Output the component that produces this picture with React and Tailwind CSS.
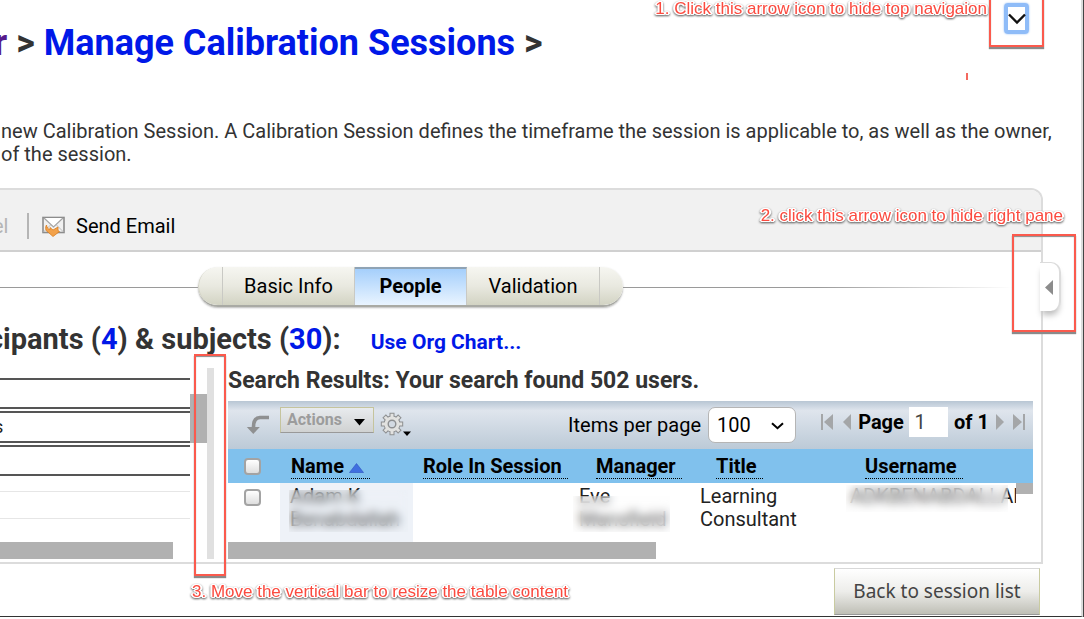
import React from "react";

const noteText =
  "absolute whitespace-nowrap font-['Liberation_Sans',sans-serif] text-[17px] leading-5 text-[#fb4a3f] [text-shadow:1px_0_0_#fff,-1px_0_0_#fff,0_1px_0_#fff,0_-1px_0_#fff,1px_1px_0_#fff,-1px_1px_0_#fff,1px_-1px_0_#fff,-1px_-1px_0_#fff,2px_0_0_#fff,-2px_0_0_#fff] [filter:drop-shadow(0_1px_1px_#555)]";
const noteBox =
  "pointer-events-none absolute border-2 border-[#fb5a4d] shadow-[0_2px_1px_#8a8a8a,inset_0_1px_1px_#8a8a8a]";

function Notes() {
  return (
    <>
      <p className={`${noteText} right-[96px] -top-[1px]`}>1. Click this arrow icon to hide top navigaion</p>
      <div className={`${noteBox} right-[39px] -top-[8px] h-[55px] w-[55px]`} />
      <div className="absolute right-[115px] top-[73px] h-[7px] w-[2px] bg-[#f4695f]" />
      <p className={`${noteText} right-[20px] top-[206px]`}>2. click this arrow icon to hide right pane</p>
      <div className={`${noteBox} right-[7px] top-[234px] h-[98px] w-[64px]`} />
      <div className={`${noteBox} left-[194px] top-[354px] h-[222px] w-[32px]`} />
      <p className={`${noteText} left-[192px] top-[582px]`}>3. Move the vertical bar to resize the table content</p>
    </>
  );
}

function EnvelopeIcon() {
  return (
    <svg width="23" height="21" viewBox="0 0 23 21" aria-hidden="true">
      <rect x="1" y="1.5" width="21" height="15" fill="#f1f1f1" stroke="#8c8c8c" strokeWidth="1.6" />
      <path d="M2 2l9.500 9 9.500-9" fill="#fff" stroke="#a5a5a5" strokeWidth="1.200" />
      <path d="M1.500 16l7-7M21.500 16l-7-7" stroke="#bdbdbd" />
      <path d="M4.500 9c-1.500 2.500-1 6 2 7.500l4.500 4 6.500-5-1.500-1V11l-5 3-3-2.500v2C6 13 4.800 11.500 4.500 9z" fill="#f2a14a" stroke="#dc7d1e" strokeWidth=".8" />
    </svg>
  );
}

function ReturnIcon() {
  return (
    <svg width="24" height="22" viewBox="0 0 24 22" aria-hidden="true">
      <path d="M23 3.500H14Q7.500 4 7.500 13" fill="none" stroke="#8f9091" strokeWidth="3.600" />
      <path d="M.8 13h13L7.300 20z" fill="#8f9091" />
    </svg>
  );
}

function GearIcon() {
  return (
    <svg width="32" height="26" viewBox="0 0 32 26" aria-hidden="true">
      <g stroke="#8d8f91" strokeWidth="5">
        <path d="M12 .8v22.400M.8 12h22.400M4.100 4.100l15.800 15.800M19.900 4.100L4.100 19.900" />
      </g>
      <circle cx="12" cy="12" r="8.500" fill="#8d8f91" />
      <g stroke="#e2e2e0" strokeWidth="3">
        <path d="M12 1.800v20.400M1.800 12h20.400M4.800 4.800l14.400 14.400M19.200 4.800L4.800 19.200" />
      </g>
      <circle cx="12" cy="12" r="7.600" fill="#e2e2e0" />
      <circle cx="12" cy="12" r="3.800" fill="#d3dae2" stroke="#8d8f91" strokeWidth="1.400" />
      <path d="M23 19.500h8l-4 4.500z" fill="#000" />
    </svg>
  );
}

function PagerIcon({ d }) {
  return (
    <svg width="13" height="16" viewBox="0 0 13 16" fill="#a4a6a8" aria-hidden="true">
      <path d={d} />
    </svg>
  );
}

function TabBar() {
  const cell = "flex h-full items-center justify-center border-r border-[#c9c9c4]";
  const face = "bg-linear-to-b from-[#f6f6f1] via-[#e9e9e0] to-[#d2d3c3]";
  return (
    <div className="flex items-center pt-[15px]">
      <div className="h-px w-[198px] shrink-0 bg-[#9a9a9a]" />
      <nav className="flex h-[40px] shrink-0 overflow-hidden rounded-full border-b-2 border-[#a9aaa4] text-[20px] text-black shadow-[0_1px_2px_#bbb]">
        <span className={`${cell} ${face} w-[25px] rounded-l-full border-l border-l-[#cfcfc0]`} />
        <button className={`${cell} ${face} w-[132px]`}>Basic Info</button>
        <button className={`${cell} w-[112px] border-t-2 border-t-[#8fa3b5] bg-linear-to-b from-[#a5cffb] to-[#e9f4ff] pb-[2px] font-bold`}>
          People
        </button>
        <button className={`${cell} ${face} w-[133px]`}>Validation</button>
        <span className={`${face} h-full w-[23px] rounded-r-full`} />
      </nav>
      <div className="mr-[29px] h-px flex-1 bg-linear-to-r from-[#9a9a9a] from-50% to-white" />
    </div>
  );
}

function LeftPane() {
  return (
    <div className="flex w-[207px] shrink-0">
      <div className="flex w-[190px] flex-col pt-[22px]">
        <div className="h-[31px] border-t-2 border-b-2 border-[#555]" />
        <div className="mt-[2px] flex h-[32px] items-center overflow-hidden border-t-2 border-b-2 border-[#555] text-[18px] leading-none text-[#222]">
          <span className="-ml-[6px]">s</span>
        </div>
        <div className="mt-[2px] h-[31px] border-t-2 border-b-2 border-[#555]" />
        <div className="mt-[15px] h-[28px] border-t border-b border-[#e6e6e6]" />
        <div className="mt-[23px] h-[17px] w-[173px] bg-[#b1b1b1]" />
      </div>
      <div className="mt-[38px] h-[49px] w-[17px] bg-[#b1b1b1]" />
    </div>
  );
}

const check =
  "block size-[17px] appearance-none rounded-[4px] border-2 border-[#a3a3a3] bg-linear-to-b from-white to-[#dedede]";
const headLink = "inline-block border-b border-dotted border-black pr-[6px] leading-[24px] text-black";

function ResultsTable() {
  return (
    <div className="relative h-[93px] overflow-hidden">
      <table className="w-full table-fixed border-collapse text-left">
        <colgroup>
          <col className="w-[52px]" />
          <col className="w-[133px]" />
          <col className="w-[153px]" />
          <col className="w-[120px]" />
          <col className="w-[148px]" />
          <col />
        </colgroup>
        <thead>
          <tr className="h-[34px] bg-[#80c1ed] text-[20px] font-bold">
            <th className="pl-[16px]">
              <input type="checkbox" aria-label="Select all" className={check} />
            </th>
            <th className="whitespace-nowrap pl-[11px]">
              <a href="#name" className={headLink}>
                Name{" "}
                <svg width="15" height="10" viewBox="0 0 15 10" className="inline-block" aria-hidden="true">
                  <path d="M7.500 .5L14.500 9.500H.5z" fill="#3f6fe0" stroke="#2b50c0" strokeWidth=".6" />
                </svg>
              </a>
            </th>
            <th className="whitespace-nowrap pl-[10px]">
              <a href="#role" className={headLink}>Role In Session</a>
            </th>
            <th className="pl-[30px]">
              <a href="#manager" className={headLink}>Manager</a>
            </th>
            <th className="pl-[30px]">
              <a href="#title" className={headLink}>Title</a>
            </th>
            <th className="pl-[31px]">
              <a href="#username" className={headLink}>Username</a>
            </th>
          </tr>
        </thead>
        <tbody>
          <tr className="h-[59px] align-top text-[20px] leading-[23px] text-[#222]">
            <td className="pt-[6px] pl-[16px]">
              <input type="checkbox" aria-label="Select Adam K Benabdallah" className={check} />
            </td>
            <td className="relative bg-[#eef2f8] pt-[2px] pl-[10px]">
              Adam K
              <br />
              Benabdallah
              <span className="absolute top-[7px] left-[9px] h-[42px] w-[119px] bg-[#eaeef3]/20 backdrop-blur-[5px]" />
            </td>
            <td />
            <td className="relative pt-[2px] pl-[13px]">
              Eve
              <br />
              Mansfield
              <span className="absolute top-[13px] left-[7px] h-[36px] w-[97px] bg-[#f8f8f8]/20 backdrop-blur-[5px]" />
            </td>
            <td className="pt-[2px] pl-[14px]">
              Learning
              <br />
              Consultant
            </td>
            <td className="relative overflow-hidden whitespace-nowrap pt-[2px] pl-[16px]">
              ADKBENABDALLAH
              <span className="absolute top-[2px] left-[12px] h-[27px] w-[162px] bg-[#f8f8f8]/20 backdrop-blur-[5px]" />
            </td>
          </tr>
        </tbody>
      </table>
      <div className="absolute top-[34px] right-0 h-[59px] w-[17px] bg-white">
        <div className="h-[11px] bg-[#b1b1b1]" />
      </div>
    </div>
  );
}

function ResultsToolbar() {
  return (
    <div className="flex h-[48px] items-center bg-linear-to-b from-[#b8c6d4] via-[#dfe5ed] via-20% to-[#bccad7] text-[20px] text-black">
      <button aria-label="Undo" className="ml-[18px]">
        <ReturnIcon />
      </button>
      <button className="mb-[10px] ml-[10px] flex h-[26px] w-[94px] items-center justify-between border border-[#c5c49d] border-b-[#999] bg-linear-to-b from-[#e8ebee] to-[#d0d2d2] px-[6px] text-[16px] font-bold text-[#9c9c9c]">
        Actions
        <svg width="11" height="7" viewBox="0 0 11 7" className="mt-1 mr-[2px]" aria-hidden="true">
          <path d="M0 0h11L5.500 6.500z" fill="#000" />
        </svg>
      </button>
      <button aria-label="Table settings" className="ml-[6px]">
        <GearIcon />
      </button>
      <label htmlFor="per-page" className="mr-[7px] ml-auto whitespace-nowrap">
        Items per page
      </label>
      <div className="relative">
        <select
          id="per-page"
          defaultValue="100"
          className="h-[36px] w-[88px] appearance-none rounded-[7px] border border-[#b5b5b5] bg-white pl-[8px] text-[20px]"
        >
          <option>100</option>
        </select>
        <svg width="13" height="8" viewBox="0 0 13 8" className="pointer-events-none absolute top-[15px] right-[12px]" aria-hidden="true">
          <path d="M1 1.200l5.500 5 5.500-5" fill="none" stroke="#000" strokeWidth="2" />
        </svg>
      </div>
      <div className="mr-[7px] mb-[6px] ml-[25px] flex w-[205px] items-center justify-between font-bold">
        <button aria-label="First page"><PagerIcon d="M0 0h2v16H0zM12 0v16L3 8z" /></button>
        <button aria-label="Previous page"><PagerIcon d="M11 0v16L3 8z" /></button>
        <label htmlFor="page">Page</label>
        <input id="page" defaultValue="1" className="h-[30px] w-[39px] bg-white pl-[5px] text-[20px] font-normal text-[#444]" />
        <span>of 1</span>
        <button aria-label="Next page"><PagerIcon d="M2 0v16l8-8z" /></button>
        <button aria-label="Last page"><PagerIcon d="M10 0h2v16h-2zM0 0v16l9-8z" /></button>
      </div>
    </div>
  );
}

export default function App() {
  return (
    <div className="relative overflow-hidden border-r border-[#444] bg-white font-[Roboto,'Noto_Sans',sans-serif]">
      <div className="border-r-2 border-b border-r-[#dcdcdc] border-b-[#333] pb-px">
        <header className="flex items-start justify-between pt-[21px]">
          <h1 className="-ml-[6px] whitespace-nowrap text-[36px] leading-[44px] font-bold text-[#333]">
            <a href="#admin" className="text-[#551a8b]">r</a> &gt;{" "}
            <a href="#sessions" className="text-[#0018e8]">Manage Calibration Sessions</a> &gt;
          </h1>
          <button
            aria-label="Hide top navigation"
            className="-mt-[18px] mr-[52px] flex h-[31px] w-[25px] items-center justify-center rounded-[4px] border-[4px] border-[#8fbcf8] shadow-[0_0_2px_#8fbcf8]"
          >
            <svg width="18" height="12" viewBox="0 0 18 12" className="shrink-0" aria-hidden="true">
              <path d="M1 1.500l8 8 8-8" fill="none" stroke="#111" strokeWidth="2.400" />
            </svg>
          </button>
        </header>
        <p className="mt-[55px] whitespace-nowrap pl-px text-[20px] leading-[23px] text-[#333]">
          new Calibration Session. A Calibration Session defines the timeframe the session is applicable to, as well as the owner,
          <br />
          of the session.
        </p>
        <main className="relative mt-[22px] mr-[38px] rounded-tr-[12px] border-t-2 border-r-2 border-b-2 border-[#dcdcdc]">
          <div className="flex h-[62px] items-center overflow-hidden rounded-tr-[10px] border-b-2 border-[#d0d0d0] bg-[#f1f1f1] pt-[12px] text-[20px]">
            <span className="-ml-[7px] w-[34px] text-[#b5b5b5]">el</span>
            <span className="h-[26px] w-[2px] bg-[#b5b5b5]" />
            <button className="ml-[13px] flex items-center gap-[11px] text-black">
              <EnvelopeIcon />
              Send Email
            </button>
          </div>
          <TabBar />
          <div className="mt-[16px] flex h-[33px] items-baseline leading-[32px] whitespace-nowrap">
            <h2 className="-ml-[12px] text-[29px] font-bold text-[#333]">
              cipants (<a href="#participants" className="text-[#0018e8]">4</a>) &amp; subjects (
              <a href="#subjects" className="text-[#0018e8]">30</a>):
            </h2>
            <a href="#orgchart" className="ml-[30px] text-[21px] font-bold text-[#0018e8]">Use Org Chart...</a>
          </div>
          <div className="flex">
            <LeftPane />
            <div className="mt-[12px] h-[191px] w-[7px] shrink-0 cursor-col-resize bg-[#e0e0e0]" />
            <section className="mr-[8px] ml-[14px] min-w-0 flex-1 pt-[13px] pb-[3px]">
              <h3 className="mb-[8px] text-[23px] leading-[24px] font-bold text-[#333]">
                Search Results: Your search found 502 users.
              </h3>
              <ResultsToolbar />
              <ResultsTable />
              <div className="h-[17px] w-[428px] bg-[#b1b1b1]" />
            </section>
          </div>
          <button
            aria-label="Hide right pane"
            className="absolute top-[72px] -right-[20px] flex h-[49px] w-[21px] items-center justify-center rounded-r-[10px] border-t border-r-2 border-[#dcdcdc] bg-white pr-[2px] shadow-[0_6px_6px_-2px_#bbb]"
          >
            <svg width="8" height="15" viewBox="0 0 8 15" aria-hidden="true">
              <path d="M8 0v15L0 7.500z" fill="#8c8c8c" />
            </svg>
          </button>
        </main>
        <div className="mt-[4px] mr-[41px] flex justify-end">
          <button className="h-[47px] w-[206px] border border-x-[#c9cba0] border-t-[#d8d8d8] border-b-[#999] bg-linear-to-b from-white via-[#ededea] to-[#bfbfb6] font-['Noto_Sans',sans-serif] text-[19px] text-[#444]">
            Back to session list
          </button>
        </div>
      </div>
      <Notes />
    </div>
  );
}
